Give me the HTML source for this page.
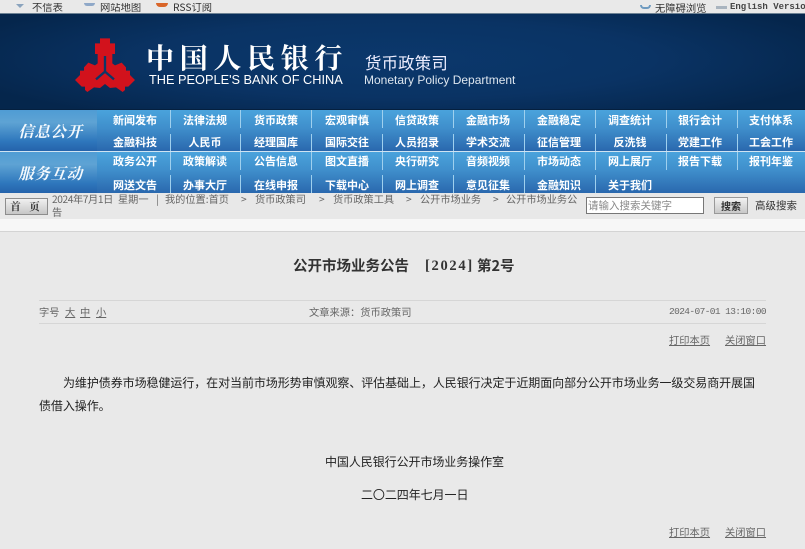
<!DOCTYPE html>
<html lang="zh"><head><meta charset="utf-8"><title>公开市场业务公告</title>
<style>
html,body{margin:0;padding:0;width:805px;height:549px;overflow:hidden;background:#e9e9e9}
body{position:relative;font-family:"WenQuanYi Zen Hei","Noto Sans CJK SC",sans-serif;color:#222}
.a{position:absolute;white-space:nowrap}
#banner{left:0;top:13px;width:805px;height:97px;background:radial-gradient(ellipse 460px 70px at 400px 45px,#0b386c 0%,#0a3364 55%,#05264c 100%);border-top:1px solid #6d8294;border-bottom:1px solid #05203f;box-sizing:border-box}
.nb{left:0;width:805px;background:linear-gradient(#4aa3dc,#3f8ecb 45%,#2a68ae)}
.lb{left:0;width:97px;background:linear-gradient(#4f9cd4,#5ea3d4 30%,#2f78bd 75%,#2563ab)}
.lt{left:2px;width:97px;text-align:center;color:#f4f9fd;font:italic bold 15.5px/20px "Noto Serif CJK SC","Liberation Serif",serif;letter-spacing:.6px}
.n{color:#fff;font-size:11px;line-height:14px;width:71px;text-align:center;font-weight:bold;transform:translateX(-35.5px)}
.s{width:1px;background:#9fd0ee}
.g{color:#666;font-size:10.25px;line-height:12px}
.b{color:#666;font-size:10.2px;line-height:12px;top:193px}
.u{text-decoration:underline}
.t{color:#222;font-size:12px;line-height:16px;letter-spacing:-.07px}
.tp{font-size:10.3px;line-height:12px;color:#333}
</style></head><body>
<div class="a" style="left:0;top:3px;width:805px;height:10px;overflow:hidden">
<span class="a" style="left:16px;top:1px;width:8px;height:4px;background:#8aa3bd;clip-path:polygon(0 0,100% 0,50% 100%)"></span>
<span class="a tp" style="left:32px;top:-2px">不信表</span>
<span class="a" style="left:84px;top:0;width:11px;height:3px;background:#8fa8c8;border-radius:0 0 6px 6px"></span>
<span class="a tp" style="left:100px;top:-2px">网站地图</span>
<span class="a" style="left:156px;top:0;width:12px;height:4px;background:#d9662a;border-radius:0 0 4px 4px"></span>
<span class="a tp" style="left:173px;top:-2px">RSS订阅</span>
<span class="a" style="left:640px;top:2px;width:11px;height:4px;border:2px solid #6f9bc0;border-top:0;border-radius:0 0 7px 7px;box-sizing:border-box"></span>
<span class="a tp" style="left:655px;top:-1px">无障碍浏览</span>
<span class="a" style="left:716px;top:3px;width:11px;height:3px;background:#a9b4bf"></span>
<span class="a" style="left:730px;top:-2px;font:bold 9px/12px 'Liberation Mono',monospace;color:#444">English Version</span>
</div>
<div id="banner" class="a"></div>
<svg class="a" style="left:60px;top:30px" width="100" height="70" viewBox="0 0 300 210"><path fill="#d2121c" d="M120 25H150V40H165V72H157V100L165 106L185 98L198 112V122H210V135L225 150L205 170H195V180L188 186L168 172L150 174L135 162L120 174L102 172L82 186L75 180V170H65L45 150L60 135V122H72V112L85 98L105 106L113 100V72H105V40H120Z"/><path fill="none" stroke="#0b3768" stroke-width="7" d="M135 78V125M135 125L108 148M135 125L162 148"/></svg>
<div class="a" style="left:146px;top:41px;color:#fff;font:bold 28px/32px 'Noto Serif CJK SC',serif;letter-spacing:5.7px">中国人民银行</div>
<div class="a" style="left:149px;top:72px;color:#fff;font:12.76px/15px 'Liberation Sans',sans-serif">THE PEOPLE'S BANK OF CHINA</div>
<div class="a" style="left:365px;top:54px;color:#eef;font:16.4px/20px 'WenQuanYi Zen Hei',sans-serif;letter-spacing:.2px">货币政策司</div>
<div class="a" style="left:364px;top:73px;color:#dde6ef;font:12px/14px 'Liberation Sans',sans-serif">Monetary Policy Department</div>

<div class="a nb" style="top:110px;height:41px"></div>
<div class="a" style="left:0;top:151px;width:805px;height:1px;background:#cfe3f2"></div>
<div class="a nb" style="top:152px;height:41px"></div>
<div class="a lb" style="top:110px;height:41px"></div>
<div class="a lb" style="top:152px;height:41px"></div>
<div class="a lt" style="top:121px">信息公开</div>
<div class="a lt" style="top:163px">服务互动</div>

<div class="a s" style="left:170px;top:110px;height:18px"></div><div class="a s" style="left:240px;top:110px;height:18px"></div><div class="a s" style="left:311px;top:110px;height:18px"></div><div class="a s" style="left:382px;top:110px;height:18px"></div><div class="a s" style="left:453px;top:110px;height:18px"></div><div class="a s" style="left:524px;top:110px;height:18px"></div><div class="a s" style="left:595px;top:110px;height:18px"></div><div class="a s" style="left:666px;top:110px;height:18px"></div><div class="a s" style="left:737px;top:110px;height:18px"></div>
<div class="a s" style="left:170px;top:134px;height:17px"></div><div class="a s" style="left:240px;top:134px;height:17px"></div><div class="a s" style="left:311px;top:134px;height:17px"></div><div class="a s" style="left:382px;top:134px;height:17px"></div><div class="a s" style="left:453px;top:134px;height:17px"></div><div class="a s" style="left:524px;top:134px;height:17px"></div><div class="a s" style="left:595px;top:134px;height:17px"></div><div class="a s" style="left:666px;top:134px;height:17px"></div><div class="a s" style="left:737px;top:134px;height:17px"></div>
<div class="a s" style="left:170px;top:152px;height:18px"></div><div class="a s" style="left:240px;top:152px;height:18px"></div><div class="a s" style="left:311px;top:152px;height:18px"></div><div class="a s" style="left:382px;top:152px;height:18px"></div><div class="a s" style="left:453px;top:152px;height:18px"></div><div class="a s" style="left:524px;top:152px;height:18px"></div><div class="a s" style="left:595px;top:152px;height:18px"></div><div class="a s" style="left:666px;top:152px;height:18px"></div><div class="a s" style="left:737px;top:152px;height:18px"></div>
<div class="a s" style="left:170px;top:175px;height:18px"></div><div class="a s" style="left:240px;top:175px;height:18px"></div><div class="a s" style="left:311px;top:175px;height:18px"></div><div class="a s" style="left:382px;top:175px;height:18px"></div><div class="a s" style="left:453px;top:175px;height:18px"></div><div class="a s" style="left:524px;top:175px;height:18px"></div><div class="a s" style="left:595px;top:175px;height:18px"></div>

<div class="a n" style="left:135px;top:113px">新闻发布</div><div class="a n" style="left:205px;top:113px">法律法规</div><div class="a n" style="left:276px;top:113px">货币政策</div><div class="a n" style="left:347px;top:113px">宏观审慎</div><div class="a n" style="left:417px;top:113px">信贷政策</div><div class="a n" style="left:488px;top:113px">金融市场</div><div class="a n" style="left:559px;top:113px">金融稳定</div><div class="a n" style="left:630px;top:113px">调查统计</div><div class="a n" style="left:700px;top:113px">银行会计</div><div class="a n" style="left:771px;top:113px">支付体系</div>
<div class="a n" style="left:135px;top:135px">金融科技</div><div class="a n" style="left:205px;top:135px">人民币</div><div class="a n" style="left:276px;top:135px">经理国库</div><div class="a n" style="left:347px;top:135px">国际交往</div><div class="a n" style="left:417px;top:135px">人员招录</div><div class="a n" style="left:488px;top:135px">学术交流</div><div class="a n" style="left:559px;top:135px">征信管理</div><div class="a n" style="left:630px;top:135px">反洗钱</div><div class="a n" style="left:700px;top:135px">党建工作</div><div class="a n" style="left:771px;top:135px">工会工作</div>
<div class="a n" style="left:135px;top:154px">政务公开</div><div class="a n" style="left:205px;top:154px">政策解读</div><div class="a n" style="left:276px;top:154px">公告信息</div><div class="a n" style="left:347px;top:154px">图文直播</div><div class="a n" style="left:417px;top:154px">央行研究</div><div class="a n" style="left:488px;top:154px">音频视频</div><div class="a n" style="left:559px;top:154px">市场动态</div><div class="a n" style="left:630px;top:154px">网上展厅</div><div class="a n" style="left:700px;top:154px">报告下载</div><div class="a n" style="left:771px;top:154px">报刊年鉴</div>
<div class="a n" style="left:135px;top:178px">网送文告</div><div class="a n" style="left:205px;top:178px">办事大厅</div><div class="a n" style="left:276px;top:178px">在线申报</div><div class="a n" style="left:347px;top:178px">下载中心</div><div class="a n" style="left:417px;top:178px">网上调查</div><div class="a n" style="left:488px;top:178px">意见征集</div><div class="a n" style="left:559px;top:178px">金融知识</div><div class="a n" style="left:630px;top:178px">关于我们</div>

<div class="a" style="left:0;top:193px;width:805px;height:26px;background:#e8e8e8"></div>
<div class="a" style="left:0;top:219px;width:805px;height:12px;background:#f7f7f7;border-bottom:1px solid #d4d4d4"></div>
<div class="a" style="left:5px;top:198px;width:43px;height:17px;background:linear-gradient(#f0f0f0,#c6c6c6);border:1px solid #8d8d8d;box-sizing:border-box;text-align:center;font:bold 10.5px/15px 'Noto Serif CJK SC',serif;color:#333;letter-spacing:3px">首 页</div>
<span class="a b" style="left:52px;letter-spacing:-.4px">2024年7月1日</span><span class="a b" style="left:118px">星期一</span><span class="a b" style="left:156px">|</span><span class="a b" style="left:165px">我的位置:首页</span><span class="a b" style="left:241px">&gt;</span><span class="a b" style="left:255px">货币政策司</span><span class="a b" style="left:319px">&gt;</span><span class="a b" style="left:333px">货币政策工具</span><span class="a b" style="left:406px">&gt;</span><span class="a b" style="left:420px">公开市场业务</span><span class="a b" style="left:493px">&gt;</span><span class="a b" style="left:506px">公开市场业务公</span><span class="a b" style="left:52px;top:206px">告</span>
<div class="a" style="left:586px;top:197px;width:118px;height:17px;background:#fff;border:1px solid #777;box-sizing:border-box;color:#888;font-size:10.5px;line-height:15px;padding-left:1px">请输入搜索关键字</div>
<div class="a" style="left:714px;top:197px;width:34px;height:17px;background:linear-gradient(#f2f2f2,#c8c8c8);border:1px solid #999;box-sizing:border-box;text-align:center;font-weight:bold;font-size:10px;line-height:15px;color:#333">搜索</div>
<div class="a" style="left:755px;top:199px;font-size:10.5px;line-height:13px;color:#333">高级搜索</div>

<div class="a" style="left:293px;top:257px;font-size:14.5px;line-height:18px;font-weight:bold;color:#333">公开市场业务公告</div>
<div class="a" style="left:425px;top:257px;font-size:14.5px;line-height:18px;font-weight:bold;color:#333;font-family:'Liberation Serif',serif;letter-spacing:1.7px">[2024]</div>
<div class="a" style="left:477px;top:257px;font-size:14.5px;line-height:18px;font-weight:bold;color:#333;font-family:'WenQuanYi Zen Hei','Noto Sans CJK SC',sans-serif">第2号</div>
<div class="a" style="left:39px;top:300px;width:727px;height:1px;background:#d6d6d6"></div>
<div class="a" style="left:39px;top:323px;width:727px;height:1px;background:#d6d6d6"></div>
<div class="a g" style="left:39px;top:306px">字号</div>
<div class="a g u" style="left:65px;top:306px">大</div><div class="a g u" style="left:80px;top:306px">中</div><div class="a g u" style="left:96px;top:306px">小</div>
<div class="a g" style="left:309px;top:306px">文章来源：货币政策司</div>
<div class="a" style="left:669px;top:306px;color:#666;font:9.5px/12px 'Liberation Mono',monospace;letter-spacing:-.6px">2024-07-01 13:10:00</div>
<div class="a g u" style="left:669px;top:334px;">打印本页</div>
<div class="a g u" style="left:725px;top:334px;">关闭窗口</div>
<div class="a t" style="left:63px;top:375px">为维护债券市场稳健运行，在对当前市场形势审慎观察、评估基础上，人民银行决定于近期面向部分公开市场业务一级交易商开展国</div>
<div class="a t" style="left:39px;top:398px">债借入操作。</div>
<div class="a t" style="left:325px;top:454px">中国人民银行公开市场业务操作室</div>
<div class="a t" style="left:361px;top:487px">二〇二四年七月一日</div>
<div class="a g u" style="left:669px;top:526px;">打印本页</div>
<div class="a g u" style="left:725px;top:526px;">关闭窗口</div>
</body></html>
